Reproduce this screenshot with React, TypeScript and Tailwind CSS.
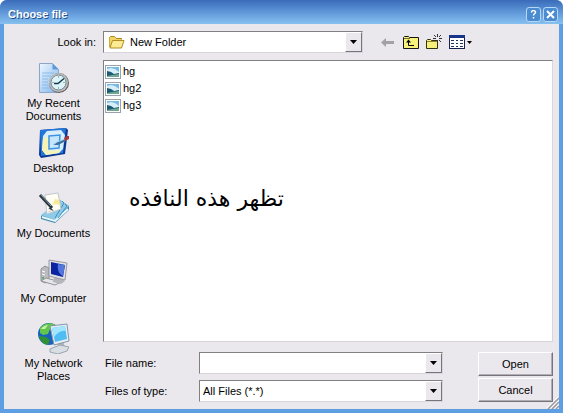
import type { ReactNode, SelectHTMLAttributes } from "react";

const SUNKEN =
  "border border-t-[#808080] border-l-[#808080] border-r-[#d8d5dc] border-b-[#d8d5dc] bg-white";
const BUTTON =
  "h-6 w-full border border-t-white border-l-white border-r-[#77757b] border-b-[#77757b] bg-[#ebe8ed] text-center shadow-[inset_-1px_-1px_0_#b0adb4]";

function RecentIcon() {
  return (
    <svg width="32" height="32" viewBox="0 0 32 32">
      <defs>
        <linearGradient id="page" x1="0" y1="0" x2="1" y2="1">
          <stop offset="0" stopColor="#eef7ff" />
          <stop offset="1" stopColor="#7fb4ea" />
        </linearGradient>
      </defs>
      <path d="M1.5 1.5h13l6 6v23h-19z" fill="url(#page)" stroke="#8ba6c8" />
      <path d="M14.500 1.500v6h6z" fill="#5f97da" />
      <path d="M4 11h12M4 14h9M4 17h6M4 20h6M4 23h6M4 26h8" stroke="#8dbbe9" />
      <circle cx="21" cy="21" r="10" fill="#6b5f5a" />
      <circle cx="20.5" cy="20.5" r="9.5" fill="#b9bfc2" />
      <circle cx="20.5" cy="20.5" r="7.5" fill="#dcf4f8" stroke="#77868d" />
      <path d="M26 16.500L20 21.500h-4" fill="none" stroke="#173a4a" strokeWidth="1.5" />
      <path d="M20.5 14.500v1M20.5 25.500v1M14.500 20.500h1M25.500 20.500h1" stroke="#5b7380" />
    </svg>
  );
}

function DesktopIcon() {
  return (
    <svg width="32" height="32" viewBox="0 0 32 32">
      <path d="M2 3L28 1l2 2-3 24-24 4-2-3z" fill="#0b3691" />
      <path d="M2 3L28 1l-3 25-22 3z" fill="#2377d8" />
      <path d="M9 4l14-1 4 5-2 14-4 4-13 2-4-5 1-14z" fill="#d8eefa" />
      <path d="M5 12l7-3-1 15 11-1-1 3-13 2-4-5z" fill="#f6f3b5" />
      <path d="M11 9l11-1-1 13-10 1z" fill="#c6e6ff" stroke="#3f93e2" strokeWidth="1.5" />
      <path d="M15 18l4-3 8-3 1 2-8 4z" fill="#416f9c" />
      <path d="M15 18l4-3 8-3" fill="none" stroke="#9fd4f5" />
      <path d="M26 11l3-2h2v3l-4 2z" fill="#a5383c" />
    </svg>
  );
}

function DocumentsIcon() {
  return (
    <svg width="32" height="32" viewBox="0 0 32 32">
      <path d="M3 24l19-16 9 6v4L17 31 3 27z" fill="#3c87ad" />
      <path d="M3 23L22 8l9 6-14 14z" fill="#8ecbe8" />
      <path d="M4 25l13 4 13-12" fill="none" stroke="#e8f8ff" strokeWidth="2" />
      <path d="M24 9l2 2-9 15M27 12l2 2-9 12" fill="none" stroke="#3f8fbb" />
      <path d="M7 3l13-2 3 16-14 5z" fill="#fffef5" stroke="#c0c7cb" />
      <path d="M17 7l4 1 1 5-4-1-4 1 2-3z" fill="#f9e993" />
      <path d="M10 20l5-2M10 17l2-1" stroke="#c8cfd3" />
      <path d="M2 3l12 13" stroke="#26353f" strokeWidth="3" />
      <path d="M3 3l10 11" stroke="#8498a6" />
      <path d="M12 15l4 4-5-2z" fill="#26353f" />
    </svg>
  );
}

function ComputerIcon() {
  return (
    <svg width="32" height="32" viewBox="0 0 32 32">
      <path d="M3 12l4-3 4 2v13l-4 2-4-2z" fill="#b9bbbf" stroke="#8d9197" />
      <path d="M4 14l3 1M4 17l3 1" stroke="#fff" />
      <circle cx="5" cy="21" r="1" fill="#4aa84e" />
      <path d="M3 24l5-3 15 4-6 3z" fill="#e6e6e9" stroke="#93969c" />
      <path d="M16 21h7l4 3-4 3-8-2z" fill="#b4b6bb" />
      <path d="M11 3l18 3-2 17-16-4z" fill="#dfe0e4" stroke="#9a9ca3" />
      <path d="M13 5l14 3-2 12-12-3z" fill="#0a23a0" />
      <path d="M20 7l7 1-2 11c-4-2-6-6-5-12z" fill="#5276dd" />
    </svg>
  );
}

function NetworkIcon() {
  return (
    <svg width="34" height="32" viewBox="0 0 34 32">
      <circle cx="12" cy="12" r="11" fill="#1762bd" />
      <path d="M3 6c3-5 12-6 15-3l-5 4-2 5-5 1-3-2z" fill="#62c54c" />
      <path d="M2 14l7 1 4 3-2 5c-5-1-8-4-9-9z" fill="#318f37" />
      <path d="M4 7c2-3 5-4 7-4l-3 4z" fill="#c4f4a1" />
      <path d="M20 20l6-1 2 6-6 1z" fill="#aeb4ba" />
      <path d="M13 27l10-4 9 2-2 4-9 3-8-2z" fill="#d8dfe4" stroke="#9ba5ae" />
      <path d="M13 4l17-2 2 17-15 4z" fill="#e8eef2" stroke="#8196a8" />
      <path d="M15 6l13-2 2 13-12 3z" fill="#4fbdf3" />
      <path d="M15 6l13-2 1 5c-4-1-8 1-12 6z" fill="#a2e5ff" />
    </svg>
  );
}

function FolderIcon() {
  return (
    <svg width="17" height="16" viewBox="0 0 17 16">
      <path d="M1.500 13V3.500l1-1h4l1.500 2h5.500V7" fill="#f3d463" stroke="#a9821b" />
      <path d="M1.500 13.500V4l2-1h3l2 2h5v8.500z" fill="#f3d463" />
      <path d="M4.500 6.500h11.500l-2.500 7.500H2z" fill="#fdeb92" stroke="#b18b24" />
    </svg>
  );
}

function ImageIcon() {
  return (
    <svg width="16" height="14" viewBox="0 0 16 14">
      <rect x="0.5" y="0.5" width="15" height="13" fill="#fff" stroke="#9aa3ab" />
      <rect x="2" y="2" width="12" height="10" fill="#78b8e4" />
      <path d="M2 4l4-1 4 1 4 3v2H2z" fill="#d5eef7" />
      <path d="M2 6l4 1 3 2 5-1v4H2z" fill="#1c5a74" />
      <path d="M2 11l5-1 7-1v3H2z" fill="#6fa793" />
    </svg>
  );
}

function DropArrow() {
  return (
    <span className="pointer-events-none absolute inset-y-px right-px flex w-[17px] items-center justify-center border border-t-white border-l-white border-r-[#77757b] border-b-[#77757b] bg-[#ebe8ed]">
      <svg width="7" height="4" viewBox="0 0 7 4">
        <path d="M0 0h7L3.5 4z" fill="#000" />
      </svg>
    </span>
  );
}

function Combo({
  icon,
  className,
  ...rest
}: { icon?: ReactNode } & SelectHTMLAttributes<HTMLSelectElement>) {
  return (
    <div className="relative w-full">
      {icon && <span className="pointer-events-none absolute top-[3px] left-[5px]">{icon}</span>}
      <select className={`block h-[22px] w-full appearance-none ${SUNKEN} ${className}`} {...rest} />
      <DropArrow />
    </div>
  );
}

const places = [
  { name: "My Recent Documents", icon: <RecentIcon /> },
  { name: "Desktop", icon: <DesktopIcon /> },
  { name: "My Documents", icon: <DocumentsIcon /> },
  { name: "My Computer", icon: <ComputerIcon /> },
  { name: "My Network Places", icon: <NetworkIcon /> },
];

const files = ["hg", "hg2", "hg3"];

function TitleBar() {
  const control =
    "flex size-[15px] items-center justify-center rounded-[3px] border border-[#b5d8f6] bg-[#4b8bd0] text-white";
  return (
    <header className="flex h-6 items-center justify-between bg-linear-to-b from-[#3a6bb9] via-[#5f97d8] to-[#86c1f0] pt-1 pr-[5px] pl-2">
      <h1 className="text-[11px] font-bold text-white [text-shadow:1px_1px_0_#24508f]">Choose file</h1>
      <div className="flex gap-[2px]">
        <button aria-label="Help" className={control}>
          <svg width="9" height="9" viewBox="0 0 9 9" fill="none" stroke="currentColor" strokeWidth="1.5">
            <path d="M2.5 2.5C2.5 0 6.5 0 6.5 2.3c0 1.5-2 1.5-2 3.2M4.5 7v1.5" />
          </svg>
        </button>
        <button aria-label="Close" className={control}>
          <svg width="9" height="9" viewBox="0 0 9 9" stroke="currentColor" strokeWidth="2">
            <path d="M1 1l7 7M8 1L1 8" />
          </svg>
        </button>
      </div>
    </header>
  );
}

function Toolbar() {
  return (
    <div className="flex items-center gap-[7px] pl-[18px]">
      <button aria-label="Back" className="w-[15px]">
        <svg width="13" height="11" viewBox="0 0 13 11">
          <path d="M0 5.5L5 1v3h8v3H5v3z" fill="#a3a1a6" />
        </svg>
      </button>
      <button aria-label="Up one level">
        <svg width="16" height="14" viewBox="0 0 16 14">
          <path d="M.5 13.5v-11l1-1h4l1 1h9v11z" fill="#f7f07a" stroke="#151515" />
          <path d="M1 3.5h6" stroke="#77712b" />
          <path d="M5.5 6v4.5H11" fill="none" stroke="#000" />
          <path d="M3 7.5L5.5 4.5 8 7.5z" fill="#000" />
        </svg>
      </button>
      <button aria-label="Create new folder">
        <svg width="16" height="16" viewBox="0 0 16 16">
          <path d="M.5 14.5v-8l1-1h3l1 1h6v8z" fill="#f7f07a" stroke="#34310f" />
          <path d="M1 7.5h10" stroke="#8b8334" />
          <path d="M11.5 0v3M11.5 6v3M7 4.5h3M13 4.5h3M8 1l2 2M15 1l-2 2M13 6l2 2" stroke="#333" />
        </svg>
      </button>
      <button aria-label="View menu" className="flex items-center gap-[2px]">
        <svg width="16" height="14" viewBox="0 0 16 14">
          <rect x="0.5" y="0.5" width="15" height="13" fill="#fff" stroke="#172150" />
          <path d="M0 1.5h16" stroke="#18358c" strokeWidth="3" />
          <path d="M2 5.5h3M2 8.5h3M2 11.5h3M7 5.5h2M7 8.5h2M7 11.5h2M11 5.5h3M11 8.5h3M11 11.5h3" stroke="#24315d" />
        </svg>
        <svg width="5" height="3" viewBox="0 0 5 3">
          <path d="M0 0h5L2.5 3z" fill="#000" />
        </svg>
      </button>
    </div>
  );
}

export default function App() {
  return (
    <div className="bg-white font-['Liberation_Sans',Arial,sans-serif] text-[11px] leading-[13px] text-black">
      <div className="flex min-h-screen flex-col overflow-hidden rounded-t-[7px] bg-[#5d9fe2]">
        <TitleBar />
        <main className="relative mx-1 mb-1 flex flex-1 flex-col bg-[#ebe8ed] pt-[7px] pr-[6px]">
          <div className="flex items-center">
            <label htmlFor="look-in" className="w-[99px] shrink-0 pr-[7px] text-right">
              Look in:
            </label>
            <div className="w-[260px]">
              <Combo id="look-in" className="pl-[26px]" icon={<FolderIcon />}>
                <option>New Folder</option>
              </Combo>
            </div>
            <Toolbar />
          </div>

          <div className="flex flex-1 pt-[7px]">
            <nav className="w-[99px] shrink-0 pt-[2px]">
              {places.map((place) => (
                <a key={place.name} href="#" className="flex min-h-[65px] flex-col items-center gap-[3px] px-3 text-center">
                  {place.icon}
                  {place.name}
                </a>
              ))}
            </nav>

            <div className="flex flex-1 flex-col">
              <section className={`h-[282px] px-[1px] pt-[2px] ${SUNKEN}`}>
                <ul>
                  {files.map((file) => (
                    <li key={file} className="flex h-[17px] items-center gap-[2px]">
                      <ImageIcon />
                      {file}
                    </li>
                  ))}
                </ul>
                <p lang="ar" dir="rtl" className="mt-[65px] ml-6 w-fit font-['DejaVu_Sans',serif] text-[22px] leading-10">
                  تظهر هذه النافذه
                </p>
              </section>

              <form className="flex justify-between gap-[35px] pt-[10px]">
                <div className="grid flex-1 grid-cols-[96px_1fr] items-center gap-y-[6px]">
                  <label htmlFor="file-name" className="pl-[2px]">File name:</label>
                  <div className="relative">
                    <input id="file-name" type="text" className={`block h-[22px] w-full pr-5 pl-[3px] ${SUNKEN}`} />
                    <DropArrow />
                  </div>
                  <label htmlFor="file-type" className="pl-[2px]">Files of type:</label>
                  <Combo id="file-type" className="pl-[3px]">
                    <option>All Files (*.*)</option>
                  </Combo>
                </div>
                <div className="flex w-[75px] flex-col gap-[2px]">
                  <button type="button" className={BUTTON}>Open</button>
                  <button type="button" className={BUTTON}>Cancel</button>
                </div>
              </form>
            </div>
          </div>
          <svg className="absolute right-0 bottom-0" width="12" height="12" viewBox="0 0 12 12">
            <path d="M1 12L12 1M5 12l7-7M9 12l3-3" stroke="#9c9aa1" strokeWidth="1.5" />
            <path d="M0 11L11 0M4 11l8-8M8 11l4-4" stroke="#fff" />
          </svg>
        </main>
      </div>
    </div>
  );
}
